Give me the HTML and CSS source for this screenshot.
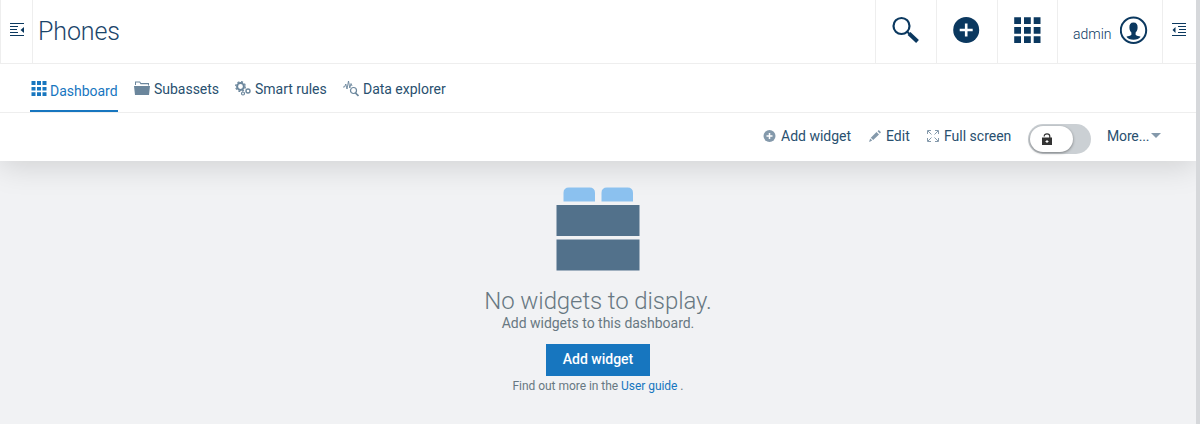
FILE: index.html
```
<!DOCTYPE html>
<html lang="en">
<head>
<meta charset="utf-8">
<title>Phones</title>
<link rel="stylesheet" href="styles.css">
</head>
<body>
<div class="app">
  <div class="page">
    <div class="panel">
      <header class="header">
        <div class="menu-toggle"><svg width="14" height="14" viewBox="0 0 14 14" class="line-icon"><path d="M0 .5h14M0 3.500h8M0 6.500h7M0 9.500h8M0 12.500h14"/><path class="solid" d="M14 4v6l-3.500-3z"/></svg></div>
        <h1 class="title">Phones</h1>
        <div class="cell"><svg width="28" height="28" viewBox="0 0 28 28"><circle cx="10.500" cy="10" r="8" fill="none" stroke="#0b385f" stroke-width="2.200"/><path d="M15.500 15l3 3" stroke="#0b385f" stroke-width="2"/><path d="M18 17.500l8.500 8" stroke="#0b385f" stroke-width="4"/></svg></div>
        <div class="cell"><svg width="28" height="28" viewBox="0 0 28 28"><circle cx="14.200" cy="14" r="13" fill="#0b385f"/><path d="M14.200 7.500v13M7.700 14h13" stroke="#fff" stroke-width="2.600"/></svg></div>
        <div class="cell cell-apps"><svg width="28" height="28" viewBox="0 0 28 28" fill="#0b385f"><path d="M1.200 1.200H8V8H1.200zM11 1.200h6.800V8H11zM20.700 1.200h6.800V8h-6.800zM1.200 11H8v6.700H1.200zM11 11h6.800v6.700H11zM20.700 11h6.800v6.700h-6.800zM1.200 20.300H8V27H1.200zM11 20.300h6.800V27H11zM20.700 20.300h6.800V27h-6.800z"/></svg></div>
        <div class="cell cell-user"><span class="user-name">admin</span><svg width="28" height="28" viewBox="0 0 28 28"><circle cx="13.500" cy="14.300" r="12.700" fill="none" stroke="#0b385f" stroke-width="2"/><path fill="#0b385f" d="M13.500 6.500c3 0 4.300 2 4.100 5.200-.1 2.500-1.100 3.800-2 4.800v2.300c1 1.300 3.300 1.300 5 2-1.300 2-3.800 3-7.100 3s-5.800-1-7.100-3c1.700-.7 4-.7 5-2v-2.300c-.9-1-1.900-2.300-2-4.800-.2-3.200 1.100-5.200 4.100-5.200z"/></svg></div>
        <div class="cell cell-drawer"><svg width="14" height="14" viewBox="0 0 14 14" class="line-icon"><path d="M0 .5h14M6 3.500h8M7 6.500h7M6 9.500h8M0 12.500h14"/><path class="solid" d="M3.500 4v6L.5 7z"/></svg></div>
      </header>
      <nav class="tabs">
        <a class="tab tab-active"><svg width="16" height="16" viewBox="0 0 16 16" fill="#1776bf"><path d="M.5 0h4v4h-4zM6 0h4v4H6zM11.500 0h4v4h-4zM.5 6h4v3.500h-4zM6 6h4v3.500H6zM11.500 6h4v3.500h-4zM.5 11.200h4V15h-4zM6 11.200h4V15H6zM11.500 11.200h4V15h-4z"/></svg><span>Dashboard</span></a>
        <a class="tab tab-assets"><svg width="16" height="16" viewBox="0 0 16 16" fill="#6b869c"><path d="M1 4V.5h5L7 2h8v2.500h-1V3.200H6.500L5.500 1.500H2V4zM0 5h16l-1 9H1z"/></svg><span>Subassets</span></a>
        <a class="tab tab-rules"><svg width="16" height="16" viewBox="0 0 16 16" fill="none" stroke="#6b869c"><circle cx="5.500" cy="5.500" r="3.400" stroke-width="2"/><circle cx="5.500" cy="5.500" r="4.800" stroke-width="1.300" stroke-dasharray="2 1.770"/><circle cx="13" cy="10" r="2" stroke-width="1.400"/><circle cx="8" cy="12.500" r="1.500" stroke-width="1.200"/></svg><span>Smart rules</span></a>
        <a class="tab tab-data"><svg width="16" height="16" viewBox="0 0 16 16" fill="none" stroke="#6b869c"><path d="M0 6h1.500L2.800 3l1.200 5 1.500-8 1.300 7L8 2.500l1 2.500" stroke-width=".9"/><circle cx="10.500" cy="9.500" r="3" stroke-width="1.200"/><path d="M12.500 12l3 3" stroke-width="1.700"/></svg><span>Data explorer</span></a>
      </nav>
      <div class="actions">
        <a class="action action-add"><svg width="13" height="13" viewBox="0 0 13 13"><circle cx="6.500" cy="6" r="6" fill="#8499ab"/><path d="M6.500 3v6M3.500 6h6" stroke="#fff" stroke-width="1.500"/></svg><span>Add widget</span></a>
        <a class="action action-edit"><svg width="12" height="12" viewBox="0 0 12 12" fill="#8499ab"><path d="M1.800 7.700L7.500 2 10 4.500 4.200 10zM8.600 1.200L9.800 0 12 2.200l-1.200 1.200zM1.200 8.500l2 2L0 12z"/></svg><span>Edit</span></a>
        <a class="action action-full"><svg width="12" height="12" viewBox="0 0 12 12" fill="none" stroke="#8499ab"><path d="M.5 4V.5H4M8 .5h3.500V4M.5 8v3.500H4M8 11.500h3.500V8M1 1l3.500 3.500M11 1L7.500 4.500M1 11l3.500-3.500M11 11L7.500 7.500"/></svg><span>Full screen</span></a>
        <div class="switch"><div class="knob"><svg width="10" height="12" viewBox="0 0 10 12"><path d="M2.200 3.500C2.200 1.500 3.300.9 5 .9s2.800.8 2.800 2.600V5" fill="none" stroke="#333" stroke-width="1.200"/><path d="M0 4.500h10V12H0z" fill="#333"/><path d="M5 7v3M3.500 8.500h3" stroke="#fff"/></svg></div></div>
        <a class="action action-more"><span>More...</span><svg width="10" height="5" viewBox="0 0 10 5"><path d="M0 0h10L5 5z" fill="#8499ab"/></svg></a>
      </div>
    </div>
    <main class="empty">
      <svg class="empty-icon" width="84" height="84" viewBox="0 0 84 84"><path fill="#8bc1ef" d="M7.500 14.500V6q0-5.500 5.500-5.500h20.500Q39 .5 39 6v8.500zM45.500 14.500V6q0-5.500 5.500-5.500h20.500Q77 .5 77 6v8.500z"/><path fill="#52718b" d="M.5 18h83v31H.5zM.5 52.500h83v31H.5z"/></svg>
      <h2 class="empty-title">No widgets to display.</h2>
      <p class="empty-text">Add widgets to this dashboard.</p>
      <button class="primary">Add widget</button>
      <p class="hint">Find out more in the <a>User guide</a> .</p>
    </main>
  </div>
  <div class="scrollbar"></div>
</div>
</body>
</html>
```
FILE: styles.css
```
* { box-sizing: border-box; }
body { margin: 0; font: 14px/20px Roboto, sans-serif; color: #0b385f; background: #f1f2f4; }
svg { display: block; flex: none; }
h1, h2, p { margin: 0; font-weight: 300; white-space: nowrap; }
.app { display: flex; width: 1200px; height: 424px; overflow: hidden; }
.page { width: 1196px; overflow: hidden; }
.scrollbar { width: 4px; background: #d6d8db; }
.panel { height: 161px; background: #fff; box-shadow: 0 4px 30px rgba(0, 0, 0, .15); }
.header { display: flex; height: 64px; border-bottom: 1px solid #eee; border-left: 1px solid #eee; }
.menu-toggle { width: 32px; padding: 23px 0 0 9px; border-right: 1px solid #eee; }
.line-icon { fill: none; stroke: #0b385f; stroke-width: 1; }
.line-icon .solid { fill: #0b385f; stroke: none; }
.title { flex: 1; padding: 17px 0 0 5px; color: #1b456a; font-size: 25px; line-height: 30px; letter-spacing: -.1px; }
.cell { width: 61px; padding: 16px 0 0 15px; border-left: 1px solid #eee; }
.cell-apps { width: 60px; }
.cell-user { display: flex; width: 105px; padding-left: 15px; }
.user-name { width: 47px; padding-top: 8px; font-weight: 300; }
.cell-drawer { width: 34px; padding: 23px 0 0 9px; }
.tabs { display: flex; height: 49px; padding-left: 30px; border-bottom: 1px solid #eee; color: #29506f; letter-spacing: -.02px; white-space: nowrap; }
.tab { display: flex; height: 48px; padding-top: 17px; gap: 4px; }
.tab span { margin-top: -2px; }
.tab-active { width: 88px; padding-left: 1px; gap: 3px; color: #1776bf; border-bottom: 2px solid #1776bf; }
.tab-active span { margin-top: 0; }
.tab-assets { width: 101px; margin-left: 16px; }
.tab-rules { width: 108px; }
.actions { display: flex; height: 48px; padding-left: 763px; color: #29506f; white-space: nowrap; }
.action { display: flex; padding-top: 17px; gap: 5px; }
.action span { margin-top: -4px; }
.action-add { width: 106px; }
.action-edit { width: 58px; }
.action-full { width: 101px; }
.switch { width: 63px; height: 30px; margin-top: 11px; padding: 2px; border-radius: 15px; background: #cbd0d4; }
.knob { width: 43px; height: 26px; padding: 7px 0 0 12px; border-radius: 13px; background: #fff; box-shadow: 0 1px 3px rgba(0, 0, 0, .4); }
.action-more { padding-left: 16px; gap: 2px; letter-spacing: -.15px; }
.action-more svg { margin-top: 3px; }
.empty { display: flex; flex-direction: column; align-items: center; padding-top: 26px; color: #687882; }
.empty-title { margin-top: 14px; font-size: 24px; line-height: 32px; letter-spacing: -.1px; }
.empty-text { margin-top: -4px; font-weight: 400; letter-spacing: -.02px; }
.primary { width: 104px; height: 32px; margin-top: 11px; padding: 0 0 2px; border: 0; background: #1776bf; color: #fff; font: 500 14px Roboto, sans-serif; }
.hint { font-size: 12px; font-weight: 400; line-height: 20px; letter-spacing: -.04px; }
.hint a { color: #1776bf; }
```
